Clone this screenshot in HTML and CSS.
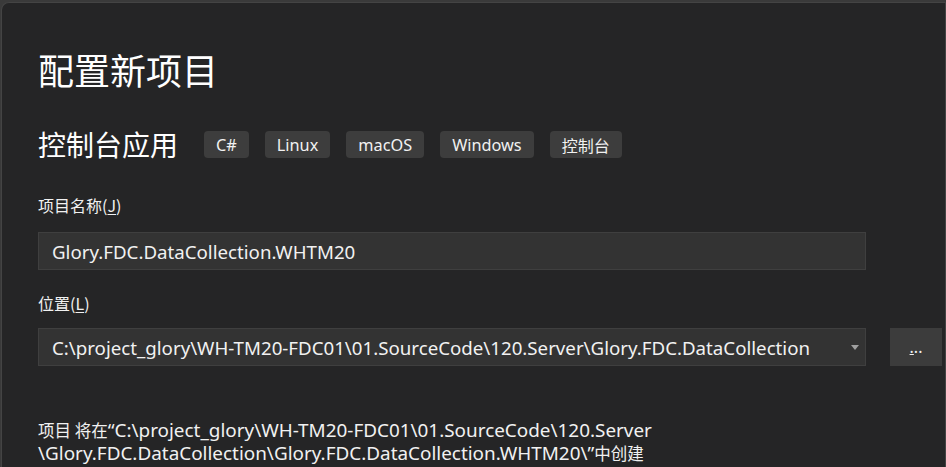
FILE: index.html
```html
<!DOCTYPE html>
<html lang="zh-CN">
<head>
<meta charset="utf-8">
<title>配置新项目</title>
<link rel="stylesheet" href="styles.css">
</head>
<body>
<div class="panel">
  <h1 class="title">配置新项目</h1>
  <div class="subrow">
    <h2 class="subtitle">控制台应用</h2>
    <div class="tags">
      <span class="tag">C#</span>
      <span class="tag">Linux</span>
      <span class="tag">macOS</span>
      <span class="tag">Windows</span>
      <span class="tag tag-cjk">控制台</span>
    </div>
  </div>
  <label class="label label-name">项目名称(<u>J</u>)</label>
  <div class="field">
    <div class="input">Glory.FDC.DataCollection.WHTM20</div>
  </div>
  <label class="label label-loc">位置(<u>L</u>)</label>
  <div class="field">
    <div class="input combo">
      <span class="combo-text">C:\project_glory\WH-TM20-FDC01\01.SourceCode\120.Server\Glory.FDC.DataCollection</span>
      <span class="arrow"></span>
    </div>
    <div class="browse"><span><u>.</u>..</span></div>
  </div>
  <p class="note"><span class="cn">项目 将在</span>“C:\project_glory\WH-TM20-FDC01\01.SourceCode\120.Server<br>\Glory.FDC.DataCollection\Glory.FDC.DataCollection.WHTM20\”<span class="cn">中创建</span></p>
</div>
</body>
</html>
```
FILE: styles.css
```css
html, body {
  margin: 0;
  padding: 0;
  height: 100%;
  overflow: hidden;
}
body {
  background: #3a3a3a;
  font-family: "Noto Sans", "Noto Sans CJK SC", sans-serif;
  color: #f1f1f1;
}
.panel {
  margin: 2px 0 0 1px;
  height: 600px;
  box-sizing: border-box;
  background: #252526;
  border-top: 1px solid #444;
  border-left: 1px solid #444;
  border-right: 1px solid #444;
  border-top-left-radius: 8px;
  padding: 44px 0 0 36px;
}
.title {
  margin: 0;
  font-family: "Noto Sans CJK SC", sans-serif;
  font-weight: 400;
  font-size: 36px;
  line-height: 44px;
  color: #ffffff;
}
.subrow {
  display: flex;
  align-items: center;
  margin-top: 40px;
  height: 27px;
}
.subtitle {
  margin: 0;
  font-family: "Noto Sans CJK SC", sans-serif;
  font-weight: 400;
  font-size: 28px;
  line-height: 27px;
  color: #ffffff;
}
.tags {
  display: flex;
  gap: 16px;
  margin-left: 26px;
}
.tag {
  display: flex;
  align-items: center;
  height: 27px;
  padding: 0 12px;
  background: #3d3d3d;
  border-radius: 4px;
  font-size: 16.3px;
  color: #f1f1f1;
}
.tag-cjk {
  font-size: 16px;
  padding: 0 12px 0 12px;
}
.label {
  display: block;
  font-family: "Noto Sans CJK SC", sans-serif;
  font-size: 16px;
  line-height: 22px;
  color: #f1f1f1;
}
.label u {
  text-underline-offset: 2px;
}
.label-name {
  margin-top: 36px;
}
.label-loc {
  margin-top: 22px;
}
.field {
  display: flex;
  gap: 24px;
  margin-top: 14px;
}
.label-name + .field {
  margin-top: 16px;
}
.input {
  box-sizing: border-box;
  width: 828px;
  height: 38px;
  background: #333333;
  border: 1px solid #3f3f3f;
  padding: 0 13px;
  display: flex;
  align-items: center;
  font-size: 18.7px;
  color: #f1f1f1;
  white-space: nowrap;
}
.combo {
  justify-content: space-between;
  padding-right: 6px;
}
.arrow {
  width: 0;
  height: 0;
  border-left: 4.5px solid transparent;
  border-right: 4.5px solid transparent;
  border-top: 5px solid #a0a0a0;
}
.browse {
  width: 52px;
  height: 38px;
  background: #3c3c3c;
  display: flex;
  align-items: center;
  justify-content: center;
  font-size: 16px;
  color: #f1f1f1;
}
.note {
  margin: 53px 0 0;
  font-family: "Noto Sans", "Noto Sans CJK SC", sans-serif;
  font-size: 18.9px;
  line-height: 23px;
  color: #f1f1f1;
  white-space: nowrap;
}
.note .cn {
  font-family: "Noto Sans CJK SC", sans-serif;
  font-size: 16.5px;
}
```
